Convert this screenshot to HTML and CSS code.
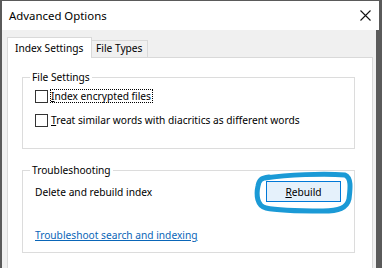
FILE: index.html
```html
<!DOCTYPE html>
<html>
<head>
<meta charset="utf-8">
<link rel="stylesheet" href="styles.css">
</head>
<body>
<div class="window">
  <div class="titlebar">
    <span class="title">Advanced Options</span>
    <svg class="close" width="11" height="11" viewBox="0 0 11 11"><path d="M0.5 0.5 L10.5 10.5 M10.5 0.5 L0.5 10.5" stroke="#111" stroke-width="1.1" fill="none"/></svg>
  </div>
  <div class="client">
    <div class="tabs">
      <div class="tab active">Index Settings</div>
      <div class="tab">File Types</div>
    </div>
    <div class="panel">
      <fieldset class="group g1">
        <legend>File Settings</legend>
        <label class="check"><span class="box"></span><span class="lbl focus"><u>I</u>ndex encrypted files</span></label>
        <label class="check"><span class="box"></span><span class="lbl"><u>T</u>reat similar words with diacritics as different words</span></label>
      </fieldset>
      <fieldset class="group g2">
        <legend>Troubleshooting</legend>
        <div class="row">
          <span>Delete and rebuild index</span>
          <span class="btn-wrap">
            <button class="btn"><u>R</u>ebuild</button>
            <svg class="scribble" width="100" height="48" viewBox="0 0 100 48"><path d="M12 8 C 34 5, 70 3, 92 5 C 99 8, 97 20, 96 29 C 94 38, 86 41, 70 41 C 50 41, 26 41, 13 38 C 4 36, 3 25, 5 16 C 6 10, 8 8, 16 7" stroke="#1b9ad6" stroke-width="5" fill="none" stroke-linecap="round" stroke-linejoin="round"/></svg>
          </span>
        </div>
        <a class="link" href="#">Troubleshoot search and indexing</a>
      </fieldset>
    </div>
  </div>
</div>
</body>
</html>
```

FILE: styles.css
```css
html, body {
  margin: 0;
  padding: 0;
}
body {
  width: 382px;
  height: 268px;
  overflow: hidden;
  background: #5a5a5a;
  font-family: "Noto Sans", "DejaVu Sans", sans-serif;
  font-size: 10.2px;
  color: #000;
}
.window {
  padding: 1px 0 0 2px;
}
.titlebar {
  width: 377px;
  height: 29px;
  background: #fff;
  display: flex;
  align-items: center;
  box-sizing: border-box;
  padding-left: 7px;
}
.title {
  font-size: 11.4px;
}
.close {
  margin-left: auto;
  margin-right: 8px;
  display: block;
}
.client {
  width: 374px;
  height: 240px;
  background: #f0f0f0;
  box-sizing: border-box;
  padding: 7px 0 0 5px;
}
.tabs {
  display: flex;
  align-items: flex-end;
  height: 21px;
  position: relative;
  z-index: 1;
}
.tab {
  box-sizing: border-box;
  border: 1px solid #d9d9d9;
  border-bottom: none;
  background: #f0f0f0;
  height: 17px;
  margin-bottom: 1px;
  padding: 0 0 0 4px;
  line-height: 15px;
  white-space: nowrap;
}
.tab.active {
  background: #fff;
  height: 21px;
  margin-bottom: 0;
  padding: 3px 0 0 7px;
  width: 85px;
}
.tab:not(.active) {
  border-left: none;
  width: 56px;
}
.panel {
  width: 366px;
  height: 220px;
  box-sizing: border-box;
  border: 1px solid #d9d9d9;
  background: #fff;
  margin-top: -1px;
}
.group {
  box-sizing: border-box;
  width: 333px;
  margin: 0 0 0 14px;
  border: 1px solid #dcdcdc;
  padding: 0 0 0 12px;
  min-width: 0;
}
.group legend {
  padding: 0 2px;
  margin-left: -5px;
  line-height: 14px;
}
.g1 {
  margin-top: 12px;
  padding-top: 0;
  padding-bottom: 16px;
}
.g2 {
  margin-top: 14px;
  padding-top: 4px;
  padding-bottom: 9px;
  padding-right: 13px;
}
.check {
  display: flex;
  align-items: center;
  height: 24px;
}
.box {
  width: 13px;
  height: 13px;
  box-sizing: border-box;
  border: 1px solid #333;
  background: #fff;
  margin-right: 2px;
}
.lbl {
  border: 1px solid transparent;
  line-height: 12px;
  padding: 0 1px 0 0;
}
.lbl.focus {
  border: 1px dotted #000;
}
.row {
  display: flex;
  align-items: center;
  justify-content: space-between;
  height: 21px;
}
.btn-wrap {
  position: relative;
  display: block;
}
.btn {
  display: block;
  width: 75px;
  height: 21px;
  box-sizing: border-box;
  border: 1px solid #0078d7;
  background: #e5f1fb;
  font-family: inherit;
  font-size: 10.2px;
  color: #000;
  padding: 0;
}
.scribble {
  position: absolute;
  left: -13px;
  top: -11px;
  pointer-events: none;
}
.link {
  display: block;
  margin-top: 26px;
  color: #0a66b8;
  line-height: 15px;
  text-decoration: underline;
}
```
